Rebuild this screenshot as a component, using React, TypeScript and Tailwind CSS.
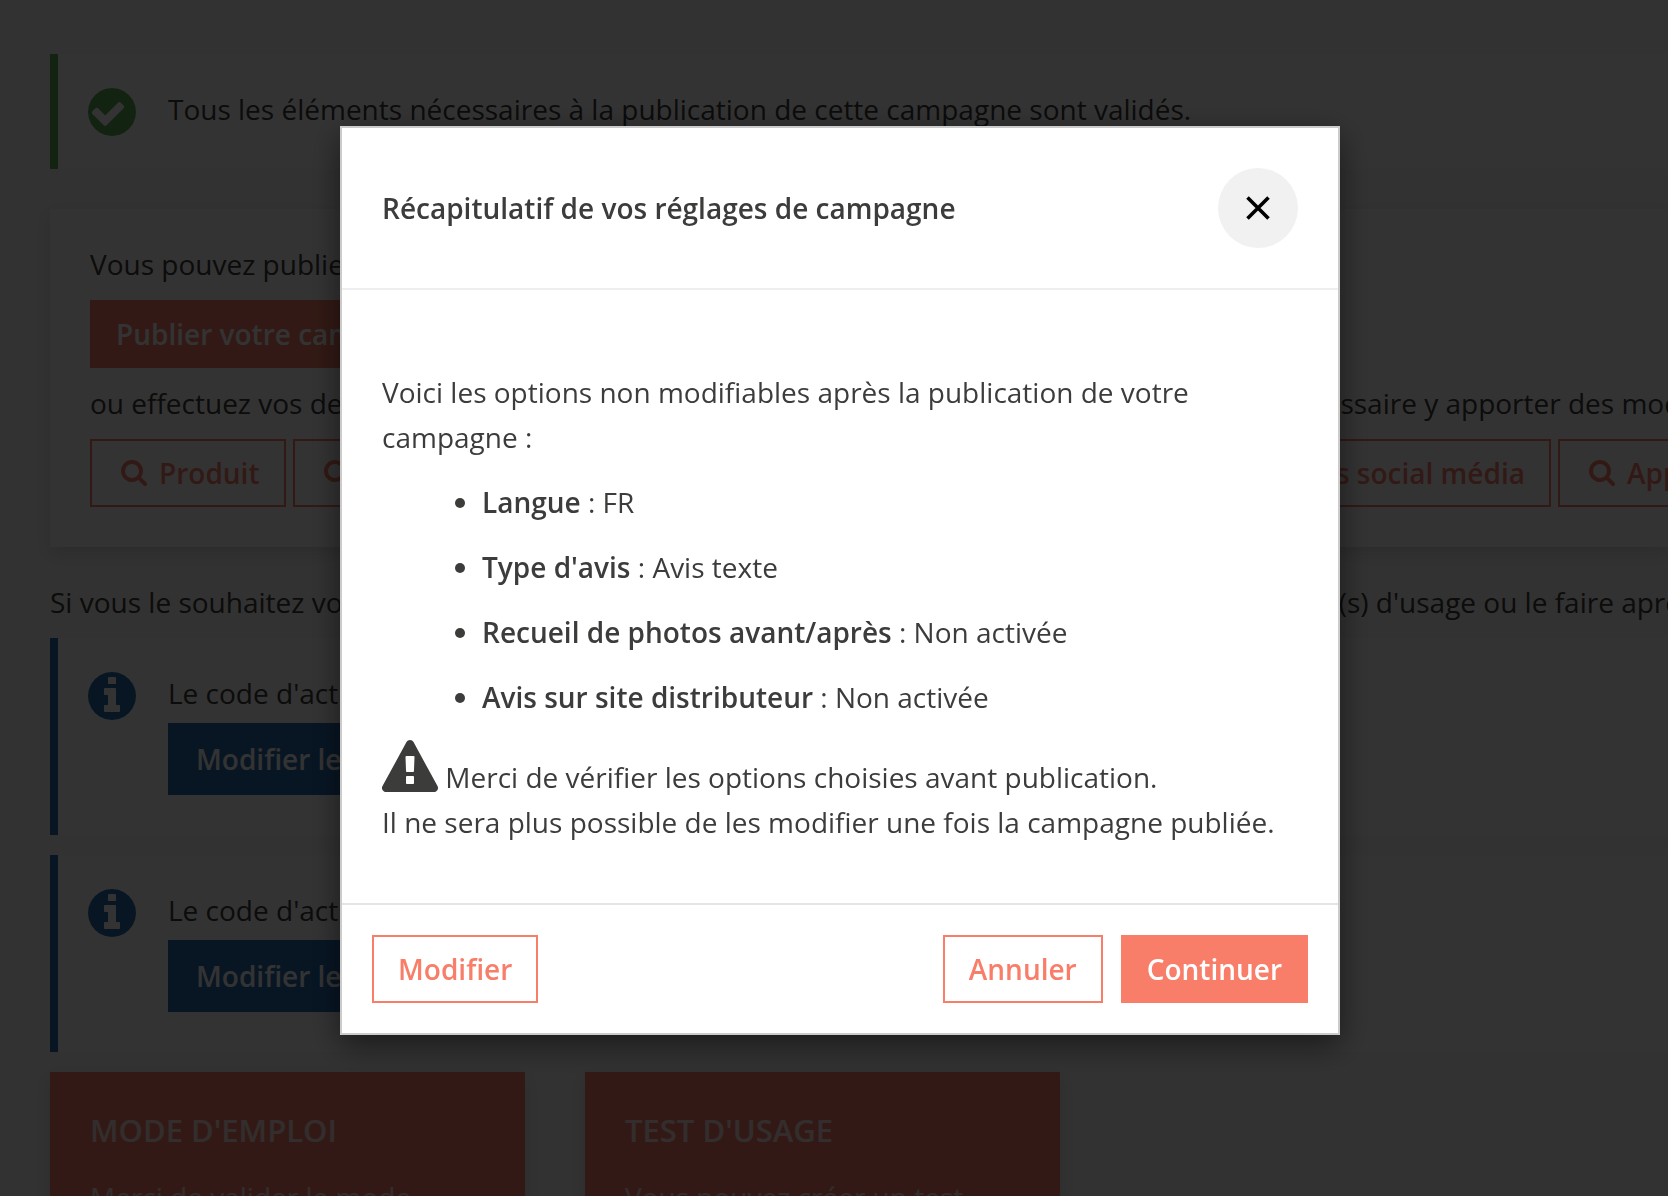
import React, { useState } from 'react'

const previews = ['Produit', 'Questionnaire', 'Mail d\'activation', 'Mail de rappel', 'Posts social média', 'Application']

const settings = [
  { name: 'Langue', value: 'FR' },
  { name: "Type d'avis", value: 'Avis texte' },
  { name: 'Recueil de photos avant/après', value: 'Non activée' },
  { name: 'Avis sur site distributeur', value: 'Non activée' },
]

const tiles = [
  { title: "MODE D'EMPLOI", text: "Merci de valider le mode d'emploi" },
  { title: "TEST D'USAGE", text: "Vous pouvez créer un test d'usage" },
]

type IconProps = { className?: string }

function CheckCircleIcon({ className }: IconProps) {
  return (
    <svg viewBox="128 128 1536 1536" fill="currentColor" className={className} aria-hidden="true">
      <path d="M1284 734q0-28-18-46l-91-90q-19-19-45-19t-45 19l-408 407-226-226q-19-19-45-19t-45 19l-91 90q-18 18-18 46 0 27 18 45l362 362q19 19 45 19 27 0 46-19l543-543q18-18 18-45zM1664 896q0 209-103 385.500t-279.500 279.500-385.500 103-385.500-103-279.500-279.500-103-385.500 103-385.500 279.500-279.500 385.500-103 385.500 103 279.500 279.500 103 385.500z" />
    </svg>
  )
}

function InfoCircleIcon({ className }: IconProps) {
  return (
    <svg viewBox="128 128 1536 1536" fill="currentColor" className={className} aria-hidden="true">
      <path d="M1152 1376v-160q0-14-9-23t-23-9h-96v-512q0-14-9-23t-23-9h-320q-14 0-23 9t-9 23v160q0 14 9 23t23 9h96v320h-96q-14 0-23 9t-9 23v160q0 14 9 23t23 9h448q14 0 23-9t9-23zM1024 480v-160q0-14-9-23t-23-9h-192q-14 0-23 9t-9 23v160q0 14 9 23t23 9h192q14 0 23-9t9-23zM1664 896q0 209-103 385.500t-279.500 279.500-385.500 103-385.500-103-279.500-279.500-103-385.500 103-385.500 279.500-279.500 385.500-103 385.500 103 279.500 279.500 103 385.500z" />
    </svg>
  )
}

function SearchIcon({ className }: IconProps) {
  return (
    <svg viewBox="64 128 1664 1664" fill="currentColor" className={className} aria-hidden="true">
      <path d="M1216 832q0-185-131.500-316.500t-316.500-131.500-316.500 131.500-131.500 316.500 131.500 316.500 316.500 131.500 316.500-131.500 131.500-316.500zM1728 1664q0 52-38 90t-90 38q-54 0-90-38l-343-342q-179 124-399 124-143 0-273.500-55.500t-225-150-150-225-55.500-273.500 55.500-273.500 150-225 225-150 273.500-55.500 273.500 55.500 225 150 150 225 55.500 273.500q0 220-124 399l343 343q37 37 37 90z" />
    </svg>
  )
}

function WarningIcon({ className }: IconProps) {
  return (
    <svg viewBox="0 0 1792 1664" fill="currentColor" className={className} aria-hidden="true">
      <path d="M1024 1375v-190q0-14-9.500-23.500t-22.500-9.500h-192q-13 0-22.500 9.500t-9.500 23.500v190q0 14 9.500 23.500t22.500 9.500h192q13 0 22.500-9.500t9.500-23.500zM1022 1001l18-459q0-12-10-19-13-11-24-11h-220q-11 0-24 11-10 7-10 21l17 457q0 10 10 16.500t24 6.500h185q14 0 23.500-6.500t10.500-16.500zM1008 67l768 1408q35 63-2 126-17 29-46.500 46t-63.500 17h-1536q-34 0-63.500-17t-46.500-46q-37-63-2-126l768-1408q17-31 47-49t65-18 65 18 47 49z" />
    </svg>
  )
}

function CodeAlert() {
  return (
    <div className="mb-5 flex border-l-8 border-[#286bb0] bg-white pb-10 pt-[33px] pl-[30px]">
      <InfoCircleIcon className="mt-px size-12 shrink-0 text-[#286bb0]" />
      <div className="ml-8">
        <p>Le code d'activation de la campagne</p>
        <button type="button" className="mt-[7px] h-18 bg-[#286bb0] px-7 font-semibold text-white">
          Modifier le code
        </button>
      </div>
    </div>
  )
}

function App() {
  const [open, setOpen] = useState(true)
  const close = () => setOpen(false)

  return (
    <div className="h-screen overflow-hidden bg-[#f8f8f8] font-['Open_Sans',sans-serif] text-[28px] leading-[45px] text-[#3c3c3b]">
      <main className="pl-[50px] pt-[54px] whitespace-nowrap">
        <div className="mb-10 flex border-l-8 border-[#5ab05a] bg-white pb-[33px] pt-[33px] pl-[30px]">
          <CheckCircleIcon className="mt-px size-12 shrink-0 text-[#5ab05a]" />
          <p className="ml-8">Tous les éléments nécessaires à la publication de cette campagne sont validés.</p>
        </div>

        <section className="mb-[33px] bg-white px-10 pb-10 pt-[33px] shadow-[0_6px_16px_rgba(0,0,0,0.12)]">
          <p>Vous pouvez publier votre campagne</p>
          <button type="button" className="my-[13px] block h-[68px] bg-[#f87e69] px-[26px] font-semibold text-white">
            Publier votre campagne
          </button>
          <p>ou effectuez vos dernières vérifications de votre campagne, avant publication et, si cela est nécessaire y apporter des modifications</p>
          <div className="mt-[13px] flex gap-[7px]">
            {previews.map((name) => (
              <button key={name} type="button" className="flex h-[68px] shrink-0 items-center gap-3 border-2 border-[#f87e69] pl-[29px] pr-6 font-semibold text-[#f87e69]">
                <SearchIcon className="size-[26px]" />
                {name}
              </button>
            ))}
          </div>
        </section>

        <p className="mb-[13px]">Si vous le souhaitez vous pouvez dès maintenant écrire le mode d'emploi de ce produit, et le(s) test(s) d'usage ou le faire après publication</p>

        <CodeAlert />
        <CodeAlert />

        <div className="flex gap-[60px]">
          {tiles.map((tile) => (
            <section key={tile.title} className="w-[475px] bg-[#f87e69] px-10 py-9 text-white/80 shadow-[0_6px_16px_rgba(0,0,0,0.12)]">
              <h2 className="text-[31px] font-semibold">{tile.title}</h2>
              <p className="mt-[22px] whitespace-normal">{tile.text}</p>
            </section>
          ))}
        </div>
      </main>

      {open && (
        <div className="fixed inset-0 flex items-start justify-center bg-black/80 pl-3 pt-[126px]">
          <div role="dialog" aria-modal="true" aria-labelledby="recap-title" className="w-full max-w-[1000px] border-2 border-[#cbcbcb] bg-white shadow-[0_10px_30px_rgba(0,0,0,0.5)]">
            <header className="flex items-center justify-between border-b-2 border-[#eee] p-10">
              <h1 id="recap-title" className="font-semibold">Récapitulatif de vos réglages de campagne</h1>
              <button type="button" aria-label="Fermer" onClick={close} className="flex size-20 items-center justify-center rounded-full bg-[#f1f1f1] text-black">
                <svg viewBox="0 0 24 24" className="size-6" fill="none" stroke="currentColor" strokeWidth="3.6">
                  <path d="M1.500 1.500 22.500 22.500M22.500 1.500 1.500 22.500" />
                </svg>
              </button>
            </header>

            <div className="px-10 pb-[58px] pt-20">
              <p>Voici les options non modifiables après la publication de votre campagne :</p>
              <ul className="my-5 list-disc space-y-5 pl-[100px]">
                {settings.map((s) => (
                  <li key={s.name}>
                    <strong className="font-semibold">{s.name}</strong> : {s.value}
                  </li>
                ))}
              </ul>
              <p>
                <WarningIcon className="inline h-[52px] w-14 align-[-4px]" />{' '}
                Merci de vérifier les options choisies avant publication.
                <br />
                Il ne sera plus possible de les modifier une fois la campagne publiée.
              </p>
            </div>

            <footer className="flex gap-[18px] border-t-2 border-[#e5e5e5] p-[30px] font-semibold">
              <button type="button" className="mr-auto h-[68px] border-2 border-[#f87e69] px-6 text-[#f87e69]">Modifier</button>
              <button type="button" onClick={close} className="h-[68px] border-2 border-[#f87e69] px-6 text-[#f87e69]">Annuler</button>
              <button type="button" className="h-[68px] border-2 border-[#f87e69] bg-[#f87e69] px-6 text-white">Continuer</button>
            </footer>
          </div>
        </div>
      )}
    </div>
  )
}

export default App
